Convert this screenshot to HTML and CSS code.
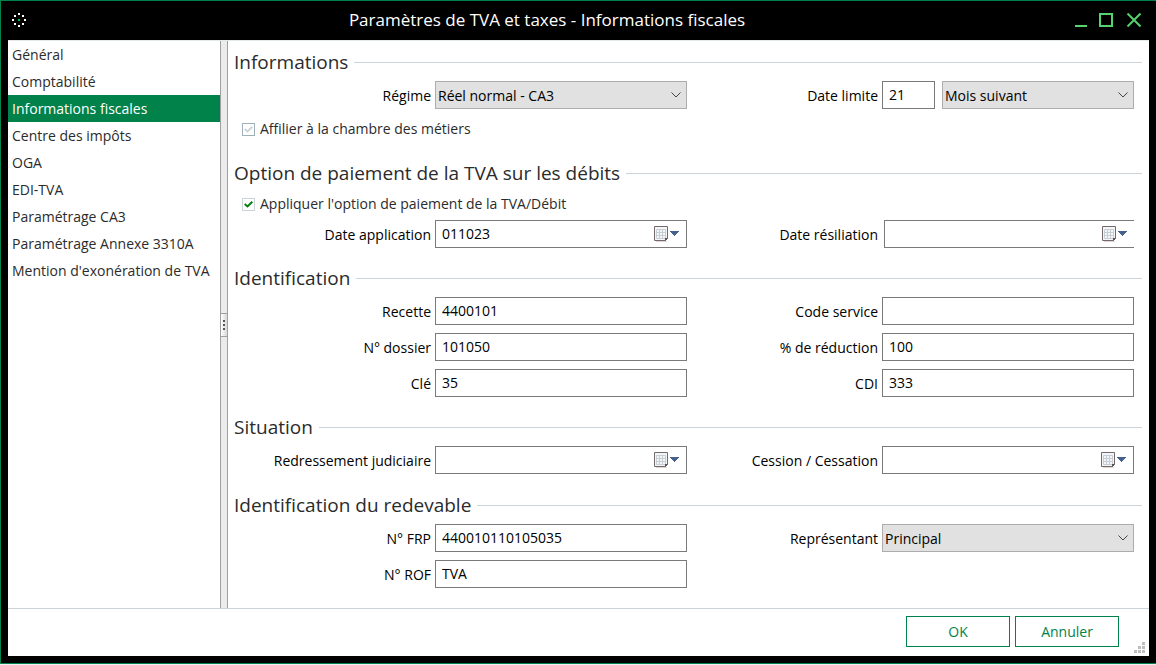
FILE: index.html
```html
<!DOCTYPE html>
<html lang="fr">
<head>
<meta charset="utf-8">
<title>Paramètres de TVA et taxes - Informations fiscales</title>
<link rel="stylesheet" href="styles.css">
</head>
<body>
<svg class="defs" aria-hidden="true">
  <symbol id="calendar" viewBox="0 0 27 17">
    <path d="M2 15.500h11" stroke="#dcd8d6"/>
    <path d="M.5 .5h13v12l-2 2h-11z" fill="#f4f5f7" stroke="#75686a"/>
    <path d="M2.500 3.500h9v9h-9zM5.500 3.500v9M8.500 3.500v9M2.500 6.500h9M2.500 9.500h9" fill="none" stroke="#c6cdd5"/>
    <path d="M11 15v-3h3z" fill="#5b5052"/>
    <path d="M16 5h9v1h-1v1h-1v1h-1v1h-1v1h-1v-1h-1v-1h-1v-1h-1v-1h-1z" fill="#46608f"/>
  </symbol>
</svg>
<div class="window">
  <header class="titlebar">
    <svg class="app-icon" width="14" height="14" viewBox="0 0 14 14" aria-hidden="true">
      <path fill="#fff" d="M6 0h2v2H6zM2 2h2v2H2zM10 2h2v2h-2zM0 6h2v2H0zM12 6h2v2h-2zM2 10h2v2H2zM10 10h2v2h-2zM6 12h2v2H6z"/>
      <path fill="#00c040" d="M6 6h2v2H6z"/>
    </svg>
    <h1 class="title">Paramètres de TVA et taxes - Informations fiscales</h1>
    <div class="controls">
      <button class="control" type="button" aria-label="Réduire"><svg width="14" height="14" viewBox="0 0 14 14"><path d="M2 13h12" stroke="#55d36c" stroke-width="2"/></svg></button>
      <button class="control" type="button" aria-label="Agrandir"><svg width="14" height="14" viewBox="0 0 14 14"><path d="M1 1h12v12H1z" fill="none" stroke="#55d36c" stroke-width="2"/></svg></button>
      <button class="control" type="button" aria-label="Fermer"><svg width="16" height="14" viewBox="0 0 16 14"><path d="M2.500 .5l13 13M15.500 .5l-13 13" stroke="#55d36c" stroke-width="2"/></svg></button>
    </div>
  </header>
  <div class="dialog">
    <div class="content">
      <nav class="sidebar">
        <a class="nav-item" href="#">Général</a>
        <a class="nav-item" href="#">Comptabilité</a>
        <a class="nav-item active" href="#">Informations fiscales</a>
        <a class="nav-item" href="#">Centre des impôts</a>
        <a class="nav-item" href="#">OGA</a>
        <a class="nav-item" href="#">EDI-TVA</a>
        <a class="nav-item" href="#">Paramétrage CA3</a>
        <a class="nav-item" href="#">Paramétrage Annexe 3310A</a>
        <a class="nav-item" href="#">Mention d'exonération de TVA</a>
      </nav>
      <div class="splitter"><div class="grip"><i></i><i></i><i></i></div></div>
      <form class="panel">
        <section class="section">
          <h2 class="heading">Informations</h2>
          <div class="row">
            <label for="regime">Régime</label>
            <select id="regime" class="field"><option>Réel normal - CA3</option></select>
            <label for="limite">Date limite</label>
            <div class="pair">
              <input id="limite" class="field" type="text" value="21">
              <select class="field" aria-label="Mois"><option>Mois suivant</option></select>
            </div>
          </div>
          <div class="check-row spaced">
            <input id="affilier" class="check" type="checkbox" checked disabled>
            <label for="affilier">Affilier à la chambre des métiers</label>
          </div>
        </section>
        <section class="section">
          <h2 class="heading">Option de paiement de la TVA sur les débits</h2>
          <div class="check-row">
            <input id="appliquer" class="check" type="checkbox" checked>
            <label for="appliquer">Appliquer l'option de paiement de la TVA/Débit</label>
          </div>
          <div class="row">
            <label for="application">Date application</label>
            <div class="field date"><input id="application" type="text" value="011023"><button type="button" aria-label="Calendrier"><svg width="27" height="17"><use href="#calendar"/></svg></button></div>
            <label for="resiliation">Date résiliation</label>
            <div class="field date open"><input id="resiliation" type="text"><button type="button" aria-label="Calendrier"><svg width="27" height="17"><use href="#calendar"/></svg></button></div>
          </div>
        </section>
        <section class="section">
          <h2 class="heading">Identification</h2>
          <div class="row">
            <label for="recette">Recette</label>
            <input id="recette" class="field" type="text" value="4400101">
            <label for="service">Code service</label>
            <input id="service" class="field" type="text">
            <label for="dossier">N° dossier</label>
            <input id="dossier" class="field" type="text" value="101050">
            <label for="reduction">% de réduction</label>
            <input id="reduction" class="field" type="text" value="100">
            <label for="cle">Clé</label>
            <input id="cle" class="field" type="text" value="35">
            <label for="cdi">CDI</label>
            <input id="cdi" class="field" type="text" value="333">
          </div>
        </section>
        <section class="section">
          <h2 class="heading">Situation</h2>
          <div class="row">
            <label for="redressement">Redressement judiciaire</label>
            <div class="field date"><input id="redressement" type="text"><button type="button" aria-label="Calendrier"><svg width="27" height="17"><use href="#calendar"/></svg></button></div>
            <label for="cession">Cession / Cessation</label>
            <div class="field date"><input id="cession" type="text"><button type="button" aria-label="Calendrier"><svg width="27" height="17"><use href="#calendar"/></svg></button></div>
          </div>
        </section>
        <section class="section">
          <h2 class="heading">Identification du redevable</h2>
          <div class="row">
            <label for="frp">N° FRP</label>
            <input id="frp" class="field" type="text" value="440010110105035">
            <label for="representant">Représentant</label>
            <select id="representant" class="field"><option>Principal</option></select>
            <label for="rof">N° ROF</label>
            <input id="rof" class="field" type="text" value="TVA">
          </div>
        </section>
      </form>
    </div>
    <footer class="footer">
      <button class="button" type="button">OK</button>
      <button class="button" type="button">Annuler</button>
      <svg class="resize" width="11" height="11" viewBox="0 0 11 11" aria-hidden="true"><path fill="#bfbfbf" d="M8 0h3v3H8zM4 4h3v3H4zM8 4h3v3H8zM0 8h3v3H0zM4 8h3v3H4zM8 8h3v3H8z"/></svg>
    </footer>
  </div>
</div>
</body>
</html>
```

FILE: styles.css
```css
* { box-sizing: border-box; }

body {
  margin: 0;
  height: 100vh;
  padding-bottom: 1px;
  background: #f0f0f0;
  color: #000;
  font: 14px/20px "Open Sans", "Noto Sans", sans-serif;
}

button, input, select { font: inherit; color: inherit; }
.defs { display: none; }

.window {
  display: flex;
  flex-direction: column;
  min-height: 100%;
  padding: 0 7px 7px;
  background: #000;
  border: solid #00824a;
  border-width: 1px 0 1px 1px;
}

.titlebar {
  display: flex;
  align-items: center;
  height: 39px;
  padding: 0 8px 1px 4px;
}
.title {
  flex: 1;
  margin: 0;
  padding-right: 5px;
  color: #fff;
  font-size: 17px;
  font-weight: 400;
  line-height: 24px;
  text-align: center;
}
.app-icon { flex: none; }
.controls { display: flex; gap: 12px; }
.control {
  display: flex;
  padding: 0;
  border: 0;
  background: none;
}

.dialog {
  flex: 1;
  display: flex;
  flex-direction: column;
  background: #fff;
  border-top: 1px solid #e4e9ec;
}
.content { flex: 1; display: flex; }

.sidebar { width: 212px; }
.nav-item {
  display: block;
  padding: 0 4px;
  color: #2b2b2b;
  line-height: 27px;
  text-decoration: none;
  white-space: nowrap;
}
.nav-item.active { background: #00824a; color: #fff; }

.splitter {
  display: flex;
  align-items: center;
  width: 8px;
  background: #ebebeb;
  border: solid #a0a0a0;
  border-width: 0 1px;
}
.grip {
  flex: 1;
  display: flex;
  flex-direction: column;
  align-items: center;
  justify-content: center;
  gap: 2px;
  height: 24px;
  background: linear-gradient(90deg, #fff, #d8d8d8);
  border: solid #a0a0a0;
  border-width: 1px 0;
}
.grip i { width: 2px; height: 2px; background: #555; }

.panel {
  flex: 1;
  min-width: 0;
  padding: 7px 7px 18px 6px;
}
.section { margin-bottom: 16px; }
.section:nth-last-child(2) { margin-bottom: 17px; }
.section:last-child { margin-bottom: 0; }

.heading {
  display: flex;
  align-items: center;
  gap: 6px;
  margin: 0 0 5px;
  color: #2b2b2b;
  font-size: 19px;
  font-weight: 400;
  line-height: 28px;
}
.heading::after {
  content: "";
  flex: 1;
  height: 1px;
  background: #cbd5d9;
}

.row {
  display: grid;
  grid-template-columns: 197px minmax(0, 1fr) 187px minmax(0, 1fr);
  align-items: center;
  gap: 8px 4px;
  margin-right: 8px;
}
.row > label { padding-top: 2px; text-align: right; }

.field {
  width: 100%;
  min-width: 0;
  height: 28px;
  margin: 0;
  padding: 0 6px 2px;
  background: #fff;
  border: 1px solid #7a7a7a;
  border-radius: 0;
}
.pair {
  display: grid;
  grid-template-columns: 53px minmax(0, 1fr);
  gap: 7px;
}

select.field {
  appearance: none;
  padding: 2px 20px 0 2px;
  border-color: #adadad;
  background: #e1e1e1 url("data:image/svg+xml,%3Csvg xmlns='http://www.w3.org/2000/svg' width='10' height='6'%3E%3Cpath d='M.5 .5L5 5L9.500 .5' fill='none' stroke='%23444'/%3E%3C/svg%3E") no-repeat right 5px center;
}

.date { display: flex; align-items: center; padding: 0 5px 0 6px; }
.date input {
  flex: 1;
  min-width: 0;
  padding: 0;
  border: 0;
  outline: 0;
}
.date button {
  display: flex;
  padding: 0;
  border: 0;
  background: none;
}
.date.open {
  width: auto;
  margin-left: 2px;
  border-right: 0;
}

.check-row {
  display: flex;
  align-items: center;
  gap: 5px;
  height: 24px;
  margin-bottom: 4px;
  padding-left: 8px;
  color: #2b2b2b;
}
.check-row.spaced { margin: 8px 0 18px; }
.check {
  appearance: none;
  width: 13px;
  height: 13px;
  margin: 0;
  border: 1px solid #cbd5d9;
  background: #fff url("data:image/svg+xml,%3Csvg xmlns='http://www.w3.org/2000/svg' width='9' height='7'%3E%3Cpath d='M.7 3L3.500 5.500L8.300 .8' fill='none' stroke='%23008010' stroke-width='2'/%3E%3C/svg%3E") no-repeat center;
}
.check:disabled {
  border-color: #9fb0b9;
  background-image: url("data:image/svg+xml,%3Csvg xmlns='http://www.w3.org/2000/svg' width='9' height='7'%3E%3Cpath d='M.7 3L3.500 5.500L8.300 .8' fill='none' stroke='%23cbd5d9' stroke-width='2'/%3E%3C/svg%3E");
}

.footer {
  position: relative;
  display: flex;
  justify-content: flex-end;
  gap: 5px;
  padding: 7px 30px 9px;
  border-top: 1px solid #cbd5d9;
}
.button {
  width: 104px;
  height: 31px;
  padding: 0;
  background: #fff;
  border: 1px solid #00824a;
  color: #00824a;
}
.resize { position: absolute; right: 4px; bottom: 3px; }
```
